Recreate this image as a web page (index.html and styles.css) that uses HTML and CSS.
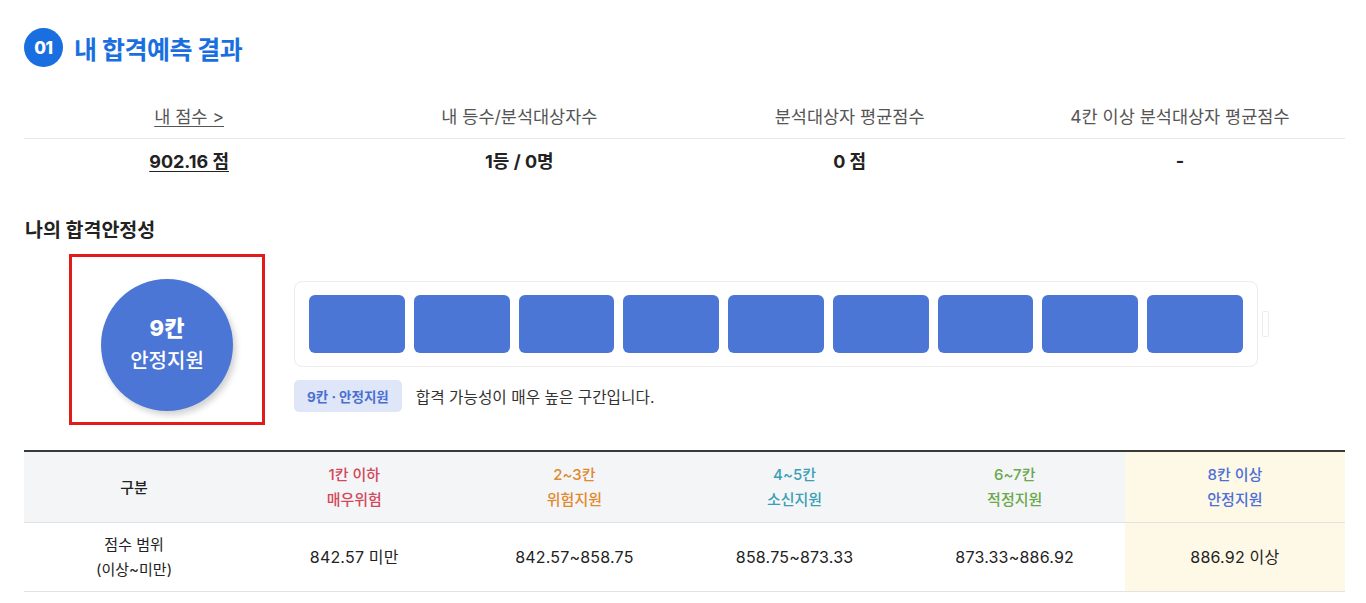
FILE: index.html
```html
<!DOCTYPE html>
<html lang="ko">

<head>
    <meta charset="UTF-8">
    <meta name="viewport" content="width=device-width, initial-scale=1.0">
    <title>내 합격예측 결과</title>
    <link rel="stylesheet" href="styles.css">
</head>

<body>
    <div class="container">
        <h2 class="section-title"><span class="num">01</span>내 합격예측 결과</h2>

        <table class="summary">
            <thead>
                <tr>
                    <th><a href="#" class="link">내 점수 &gt;</a></th>
                    <th>내 등수/분석대상자수</th>
                    <th>분석대상자 평균점수</th>
                    <th>4칸 이상 분석대상자 평균점수</th>
                </tr>
            </thead>
            <tbody>
                <tr>
                    <td><a href="#" class="link strong">902.16 점</a></td>
                    <td>1등 / 0명</td>
                    <td>0 점</td>
                    <td>-</td>
                </tr>
            </tbody>
        </table>

        <h3 class="sub-title">나의 합격안정성</h3>

        <div class="stability">
            <div class="grade-box">
                <div class="grade-circle">
                    <strong>9칸</strong>
                    <span>안정지원</span>
                </div>
            </div>
            <div class="gauge-area">
                <div class="gauge-row">
                    <div class="gauge">
                        <div class="cell on"></div>
                        <div class="cell on"></div>
                        <div class="cell on"></div>
                        <div class="cell on"></div>
                        <div class="cell on"></div>
                        <div class="cell on"></div>
                        <div class="cell on"></div>
                        <div class="cell on"></div>
                        <div class="cell on"></div>
                    </div>
                    <div class="gauge-cap"></div>
                </div>
                <p class="gauge-desc"><span class="tag">9칸 · 안정지원</span>합격 가능성이 매우 높은 구간입니다.</p>
            </div>
        </div>

        <table class="range">
            <thead>
                <tr>
                    <th>구분</th>
                    <th class="lv1">1칸 이하<br>매우위험</th>
                    <th class="lv2">2~3칸<br>위험지원</th>
                    <th class="lv3">4~5칸<br>소신지원</th>
                    <th class="lv4">6~7칸<br>적정지원</th>
                    <th class="lv5 active">8칸 이상<br>안정지원</th>
                </tr>
            </thead>
            <tbody>
                <tr>
                    <td class="label">점수 범위<br>(이상~미만)</td>
                    <td>842.57 미만</td>
                    <td>842.57~858.75</td>
                    <td>858.75~873.33</td>
                    <td>873.33~886.92</td>
                    <td class="active">886.92 이상</td>
                </tr>
            </tbody>
        </table>
    </div>
</body>

</html>
```

FILE: styles.css
```css
body {
    font-family: Inter, "Noto Sans CJK KR", sans-serif;
    background-color: #ffffff;
    color: #222222;
    margin: 0;
    padding: 0;
}

.container {
    padding: 28px 21px 0 24px;
}

.section-title {
    display: flex;
    align-items: center;
    gap: 11px;
    margin: 0;
    font-size: 25px;
    font-weight: 700;
    color: #1a6fe0;
    letter-spacing: -0.5px;
}

.section-title .num {
    display: flex;
    justify-content: center;
    align-items: center;
    width: 39px;
    height: 39px;
    border-radius: 50%;
    background-color: #1a6fe0;
    color: #ffffff;
    font-size: 17px;
    font-weight: 800;
    letter-spacing: -0.5px;
}

table {
    width: 100%;
    border-collapse: collapse;
    table-layout: fixed;
}

.summary {
    margin-top: 28px;
}

.summary th {
    height: 40px;
    font-size: 17.5px;
    font-weight: 400;
    color: #555555;
    border-bottom: 1px solid #e8e8e8;
    padding: 0 0 3px;
}

.summary td {
    height: 42px;
    text-align: center;
    font-size: 18px;
    font-weight: 700;
    color: #222222;
    padding: 0 0 4px;
}

.link {
    color: #555555;
    text-decoration: underline;
    text-underline-offset: 3px;
}

.link.strong {
    color: #222222;
    font-weight: 700;
}

.sub-title {
    margin: 29px 0 0 1px;
    font-size: 19.5px;
    font-weight: 700;
    color: #222222;
}

.stability {
    display: flex;
    align-items: flex-start;
    gap: 29px;
    margin: 11px 0 0 45px;
}

.grade-box {
    display: flex;
    justify-content: center;
    align-items: center;
    box-sizing: border-box;
    width: 196px;
    height: 171px;
    padding-top: 10px;
    border: 3px solid #e21b1b;
}

.grade-circle {
    display: flex;
    flex-direction: column;
    justify-content: center;
    align-items: center;
    width: 132px;
    height: 132px;
    border-radius: 50%;
    background-color: #4b76d5;
    color: #ffffff;
    box-shadow: 3px 4px 6px rgba(0, 0, 0, 0.18);
}

.grade-circle strong {
    font-size: 22px;
    font-weight: 800;
    line-height: 33px;
}

.grade-circle span {
    font-size: 20px;
    font-weight: 500;
    line-height: 33px;
}

.gauge-area {
    padding-top: 27px;
}

.gauge-row {
    display: flex;
    align-items: center;
    gap: 4px;
}

.gauge {
    display: flex;
    gap: 9px;
    width: 934px;
    padding: 13px 14px;
    border: 1px solid #ececec;
    border-radius: 8px;
}

.cell {
    flex: 1;
    height: 58px;
    border-radius: 6px;
    background-color: #e9ecf2;
}

.cell.on {
    background-color: #4b76d5;
}

.gauge-cap {
    width: 5px;
    height: 24px;
    border: 1px solid #ececec;
    border-radius: 2px;
}

.gauge-desc {
    display: flex;
    align-items: center;
    gap: 14px;
    margin: 13px 0 0;
    font-size: 15.7px;
    color: #333333;
}

.tag {
    padding: 6px 13px;
    border-radius: 5px;
    background-color: #dee6f8;
    color: #4a6fd0;
    font-size: 13.5px;
    font-weight: 700;
}

.range {
    margin-top: 25px;
    border-top: 2px solid #3a3a3a;
}

.range th {
    height: 70px;
    padding: 0;
    background-color: #f4f5f7;
    border-bottom: 1px solid #e2e2e2;
    font-size: 15px;
    font-weight: 500;
    line-height: 25px;
    color: #222222;
}

.range td {
    height: 68px;
    padding: 0;
    text-align: center;
    border-bottom: 1px solid #e2e2e2;
    font-size: 16px;
    font-weight: 400;
    letter-spacing: 0.2px;
    line-height: 25px;
    color: #222222;
}

.range td.label {
    font-size: 15px;
    letter-spacing: 0;
}

.range .lv1 {
    color: #d2485a;
}

.range .lv2 {
    color: #e08a2e;
}

.range .lv3 {
    color: #3a9fb5;
}

.range .lv4 {
    color: #6aa84a;
}

.range .lv5 {
    color: #4b6fd8;
}

.range .active {
    background-color: #fef8e6;
}
```
